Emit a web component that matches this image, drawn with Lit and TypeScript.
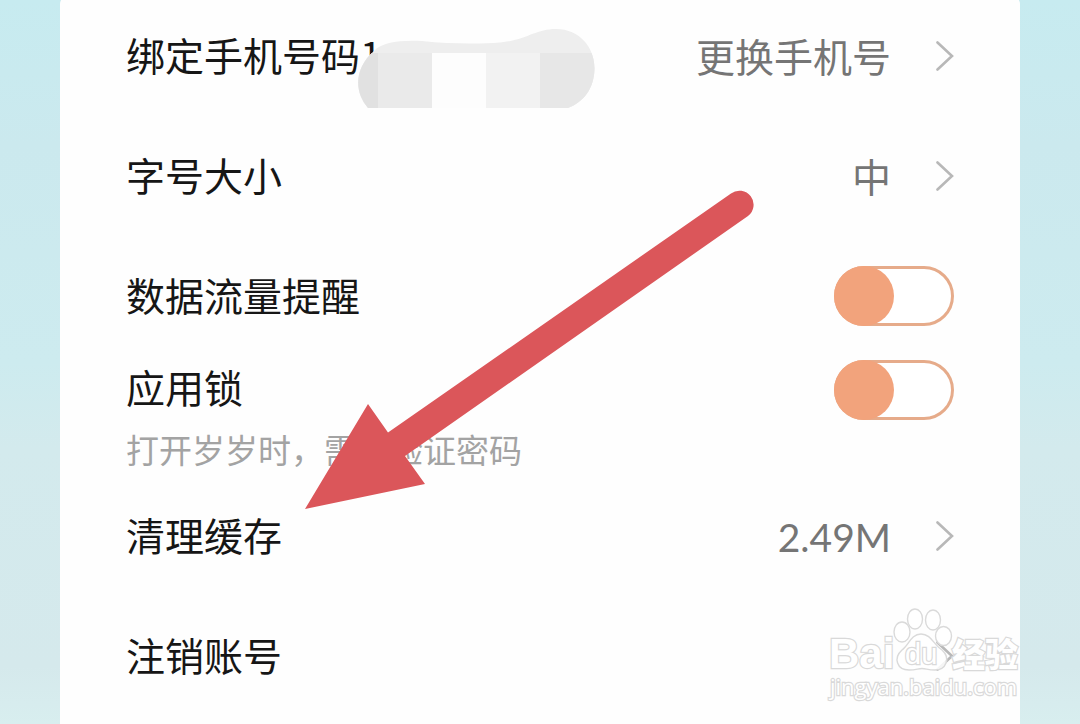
import { LitElement, html, svg, css, nothing } from "lit";
import { customElement, property } from "lit/decorators.js";

const chevron = html`<svg class="chevron" viewBox="0 0 18 30" width="18" height="30" aria-hidden="true">
  <path d="M1.5 1.5 L16 15 L1.5 28.5" fill="none" stroke="#b8b8b8" stroke-width="2.6" stroke-linecap="round" stroke-linejoin="miter" />
</svg>`;

@customElement("link-row")
class LinkRow extends LitElement {
  @property() label = "";
  @property() value = "";

  static styles = css`
    :host { display: block; }
    .row {
      display: flex;
      align-items: center;
      width: 100%;
      min-height: 120px;
      padding: 0 66px;
      border: 0;
      background: none;
      font: inherit;
      color: #161616;
      text-align: left;
      cursor: pointer;
    }
    .label { flex: 1; position: relative; line-height: 52px; padding-bottom: 4px; }
    .value { color: #757575; margin-right: 45px; padding-top: 2px; font-family: Lato, "Noto Sans CJK SC", sans-serif; }
    .chevron { display: block; flex: none; }
  `;

  render() {
    return html`<button class="row" type="button">
      <span class="label">${this.label}<slot></slot></span>
      ${this.value ? html`<span class="value">${this.value}</span>` : nothing}
      ${chevron}
    </button>`;
  }
}

@customElement("switch-row")
class SwitchRow extends LitElement {
  @property() label = "";
  @property() note = "";

  static styles = css`
    :host { display: block; }
    .row {
      display: flex;
      align-items: center;
      justify-content: space-between;
      box-sizing: border-box;
      min-height: 120px;
      padding: 0 66px;
      color: #161616;
    }
    .row.noted { align-items: flex-start; padding-top: 4px; }
    .label { display: block; line-height: 52px; padding-bottom: 4px; }
    .note { margin: 9px 0 0; font-size: 33px; line-height: 48px; color: #a3a3a3; }
    .switch {
      appearance: none;
      flex: none;
      box-sizing: border-box;
      display: flex;
      width: 120px;
      height: 60px;
      margin: 0;
      border: 3px solid #e6ab8a;
      border-radius: 30px;
      background: #fff;
      cursor: pointer;
    }
    .switch::before {
      content: "";
      width: 60px;
      height: 60px;
      margin: -3px;
      border-radius: 50%;
      background: #f2a37c;
    }
    .switch:checked { justify-content: flex-end; background: #fbe3d7; }
  `;

  render() {
    return html`<div class=${this.note ? "row noted" : "row"}>
      <div>
        <label class="label" for="toggle">${this.label}</label>
        ${this.note ? html`<p class="note" id="note">${this.note}</p>` : nothing}
      </div>
      <input class="switch" id="toggle" type="checkbox" role="switch" />
    </div>`;
  }
}

const toes = [
  [902, 632, 8, 10],
  [915, 619, 7.5, 10],
  [933, 620, 7.5, 10],
  [943.5, 636, 8, 9.5],
];

@customElement("app-root")
class AppRoot extends LitElement {
  static styles = css`
    :host {
      display: block;
      position: relative;
      box-sizing: border-box;
      height: 100vh;
      overflow: hidden;
      padding: 0 60px;
      background: linear-gradient(#c7ebf0, #cbe9ee 20%, #cdebef 50%, #d3eaed 62%, #d5e9ec 92%, #d8eeef);
      font: 39px/60px "Noto Sans CJK SC", sans-serif;
    }
    .card {
      min-height: calc(100vh + 20px);
      margin-top: -4px;
      background: #fefefe;
      border-radius: 8px;
    }
    .list { margin: 0; padding: 0; list-style: none; }
    .mosaic { position: absolute; left: 230px; top: 1px; overflow: visible; }
    .arrow { position: absolute; left: 300px; top: 185px; pointer-events: none; }
    .mark { position: absolute; right: 55px; bottom: 20px; pointer-events: none; }
    .outline { fill: #fff; fill-opacity: 0.85; stroke: #dadada; stroke-width: 1.4; }
    .lettering { fill: #fff; stroke: #d9d9d9; stroke-width: 2.4; paint-order: stroke; }
    .brand { font: bold 42px "Liberation Sans", sans-serif; }
    .du { font: 29px "Liberation Sans", sans-serif; }
    .han { font: 900 33px "Noto Sans CJK SC", sans-serif; }
    .site { font: 22px "Open Sans", sans-serif; }
  `;

  render() {
    return html`
      <main class="card">
        <ul class="list">
          <li>
            <link-row label="绑定手机号码1" value="更换手机号">
              <svg class="mosaic" width="240" height="80" viewBox="356 29 240 80" aria-hidden="true">
                <defs>
                  <clipPath id="blob">
                    <path d="M368 108 C354 92 354 68 374 51 C382 42 400 40 422 41 C450 44 480 44 500 42.500 C527 40 535 29 556 29 C580 29 594.500 48 594.500 68 C594.500 88 584 102 568 108 Z" />
                  </clipPath>
                </defs>
                <g clip-path="url(#blob)">
                  <rect x="356" y="29" width="240" height="80" fill="#eeeeee" />
                  <rect x="356" y="53" width="22" height="56" fill="#e1e1e1" />
                  <rect x="378" y="53" width="54" height="56" fill="#eaeaea" />
                  <rect x="432" y="53" width="54" height="56" fill="#fdfdfd" />
                  <rect x="486" y="53" width="54" height="56" fill="#f2f2f2" />
                  <rect x="540" y="53" width="56" height="56" fill="#e7e7e7" />
                </g>
              </svg>
            </link-row>
          </li>
          <li><link-row label="字号大小" value="中"></link-row></li>
          <li><switch-row label="数据流量提醒"></switch-row></li>
          <li><switch-row label="应用锁" note="打开岁岁时，需要验证密码"></switch-row></li>
          <li><link-row label="清理缓存" value="2.49M"></link-row></li>
          <li><link-row label="注销账号"></link-row></li>
        </ul>
      </main>
      <svg class="arrow" width="460" height="330" viewBox="300 185 460 330" aria-hidden="true">
        <path fill="#db565a" d="M305 509 L368 404 L388 432.500 L731 193.500 A14 14 0 0 1 748 216 L405 456 L425 484 Z" />
      </svg>
      <svg class="mark" width="200" height="100" viewBox="825 604 200 100">
        ${toes.map(([cx, cy, rx, ry]) => svg`<ellipse class="outline" cx=${cx} cy=${cy} rx=${rx} ry=${ry} />`)}
        <path class="outline" d="M921 634 C911 634 909 645 902 650 C893 658 897 670 909 670 C916 670 918 668.500 922 668.500 C926 668.500 928 670 935 670 C946 670 951 658 942 650 C934 645 931 634 921 634 Z" />
        <text class="lettering brand" x="829" y="668">Bai</text>
        <text class="lettering du" x="905" y="664">du</text>
        <text class="lettering han" x="952" y="667">经验</text>
        <text class="lettering site" x="830" y="695">jingyan.baidu.com</text>
      </svg>
    `;
  }
}
